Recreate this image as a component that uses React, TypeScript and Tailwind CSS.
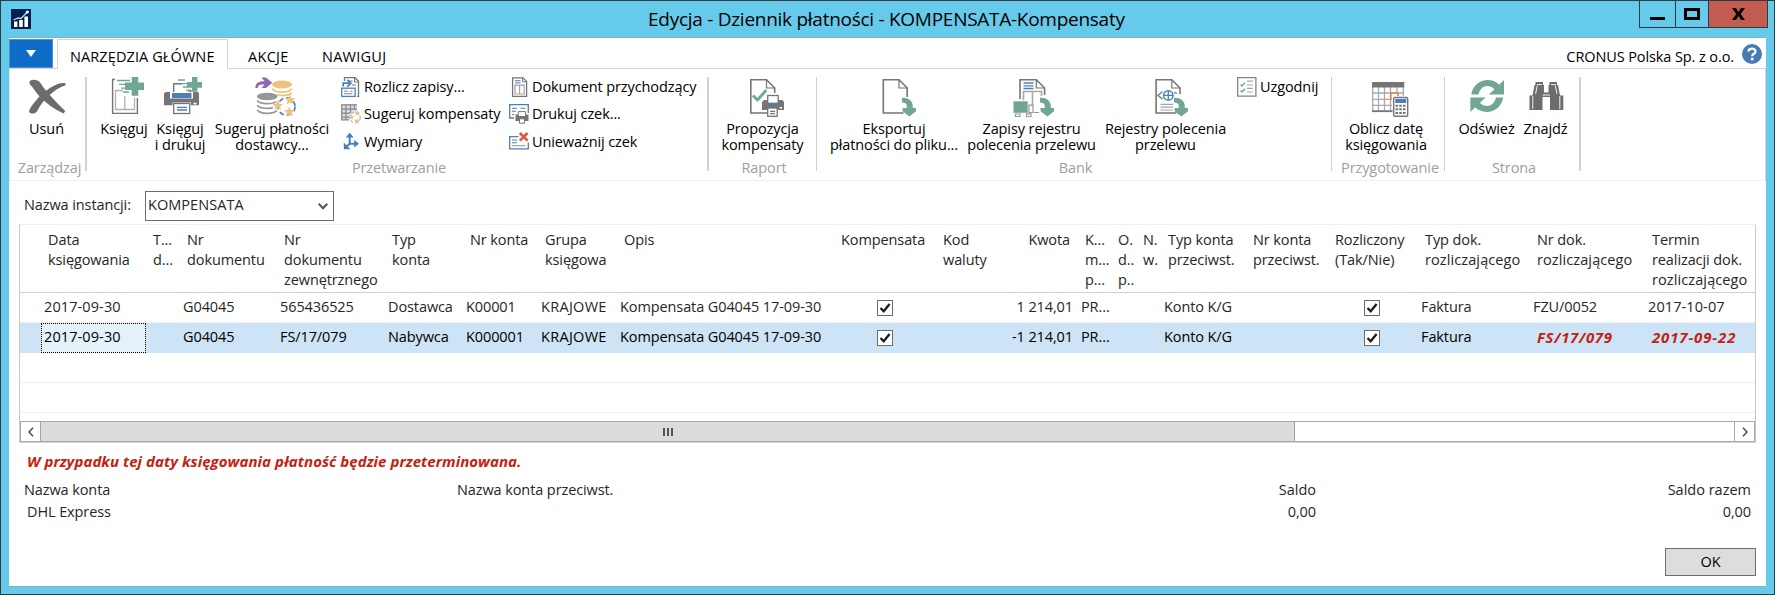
import type { ReactNode } from "react";

const GREEN = "#71a694";
const GRAY = "#757575";
const BLUE = "#4a80ba";
const GOLD = "#ecc27c";

function Big({ children }: { children: ReactNode }) {
  return (
    <svg width="40" height="40" viewBox="0 0 40 40" fill="none" className="overflow-visible">
      {children}
    </svg>
  );
}

function Small({ children }: { children: ReactNode }) {
  return (
    <svg width="20" height="20" viewBox="0 0 20 20" fill="none" className="shrink-0 overflow-visible">
      {children}
    </svg>
  );
}

function Star({ x, y, r = 5 }: { x: number; y: number; r?: number }) {
  return (
    <path
      transform={`translate(${x} ${y}) scale(${r / 5})`}
      d="M0-5.4 1.5-1.7 5.4-1.6 2.4.9 3.4 4.8 0 2.6-3.4 4.8-2.4.9-5.4-1.6-1.5-1.7Z"
      fill={GOLD}
    />
  );
}

function Page({ x, bottom = 20 }: { x: number; bottom?: number }) {
  return (
    <g transform={`translate(${x} 0)`} stroke={GRAY} strokeWidth="1.6">
      <path d={`M24.7 ${bottom}V11L16.5 2.8H.8V36H21`} />
      <path d="M16.5 2.8V11H24.7" strokeWidth="1.2" />
    </g>
  );
}

function DownArrow({ x }: { x: number }) {
  return (
    <path
      transform={`translate(${x} 20)`}
      d="M0 .7C6 .3 10.8 3.5 10.8 9V11H14V14.2L7.4 19.6.6 14.2V11H4.8V9C4.8 6.6 3 5.4 0 5.4Z"
      fill={GREEN}
    />
  );
}

const DeleteIcon = () => (
  <Big>
    <g fill="#6c6c6c">
      <path d="M2.8 4C6 1.8 11 2.8 13.5 6 18 13.5 28.5 24.5 38.3 34L36.6 36.4C25 31.5 11.5 20.5 5 9.5 2.6 8 2 5.5 2.8 4Z" />
      <path d="M38.5 6.3C31 4.8 17.5 13 9 23.5 5 28.5 2 32 2.2 35 4 37.5 8.5 37.2 10.5 33.5 15.5 23.5 27 12 38.5 8.3Z" />
    </g>
  </Big>
);

const PostIcon = () => (
  <Big>
    <path d="M11 2.5H8.6V36.4H33.4V21" stroke={GRAY} strokeWidth="1.4" />
    <path d="M19 13.5H11.5V32.5H30.5V21M20.8 19V32.5" stroke="#b0b0b0" strokeWidth="1.3" />
    <path d="M13 3.5H26M15 7.3H22M17 11.2H22M19 15H25" stroke={GREEN} strokeWidth="1.3" />
    <path d="M27.7 0H34.3V5.5H40V13H34.3V18.7H27.7V13H21V5.5H27.7Z" fill={GREEN} />
  </Big>
);

const PostPrintIcon = () => (
  <Big>
    <path d="M5.5 15H10V21.5H33V15H38L39 16.5V28.3H31V25.5H12.5V28.3H4V16.5Z" fill={GRAY} />
    <path d="M13.7 15V6.7H22M28 14H31V15" stroke={GRAY} strokeWidth="1.4" />
    <rect x="12" y="16" width="19.5" height="5" fill={BLUE} />
    <rect x="13.7" y="26.5" width="16" height="10" fill="#fff" stroke={GRAY} strokeWidth="1.3" />
    <path d="M17 30.3H27M17 33H27" stroke={BLUE} strokeWidth="1.3" />
    <rect x="33.5" y="25.8" width="3" height="1.6" fill="#fff" />
    <path d="M18 3H25M21 6.6H28M23 10H27M26 13.2H31" stroke={GREEN} strokeWidth="1.3" />
    <path d="M32 0H37.4V5H42V10.7H37.4V14.7H32V10.7H27V5H32Z" fill={GREEN} />
  </Big>
);

const SuggestIcon = () => (
  <Big>
    <path d="M3.3 11C3.5 6 6.5 4 12.5 4.2L9.5.6H14L20.3 5.7 14 11H9.5L12.5 7.6C8 7.2 6 8 5.8 11Z" fill="#9467b5" />
    <ellipse cx="30" cy="7.5" rx="10" ry="4" fill={GOLD} />
    <path d="M20.3 11.5C22 16.2 38 16.2 39.7 11.5M24.5 17.5C30 19.5 37 18.5 39.7 16" stroke={GOLD} strokeWidth="1.8" />
    <ellipse cx="15.2" cy="19.5" rx="10.3" ry="3.8" fill="#979797" />
    <path d="M5.3 23.5C8 27.6 21 27.6 24 24.5M5.3 28.3C7.5 31.7 18 32 21 30.5M5.3 33C8 37.3 22 37.3 25 33.5" stroke="#979797" strokeWidth="1.7" />
    <circle cx="34.5" cy="29.5" r="8.6" stroke={BLUE} strokeWidth="1.7" strokeDasharray="5 3" />
    <Star x={25.8} y={28.5} />
    <Star x={38} y={22.8} />
    <Star x={37.2} y={34.8} />
  </Big>
);

const ProposalIcon = () => (
  <Big>
    <Page x={7} bottom={16} />
    <path d="M10 18.5 14.5 23 23.3 13" stroke={GREEN} strokeWidth="2.8" />
    <path d="M21 23H39.5L41 25V33H19V25Z" fill={GRAY} />
    <rect x="24.7" y="18.5" width="10.5" height="8" fill="#fff" stroke={GRAY} strokeWidth="1.3" />
    <path d="M25 26.5H35" stroke={BLUE} strokeWidth="1.5" />
    <rect x="24.7" y="31" width="9.5" height="8.3" fill="#fff" stroke={GRAY} strokeWidth="1.3" />
    <path d="M27 34.3H32M27 36.6H32" stroke={BLUE} strokeWidth="1.2" />
    <rect x="36.5" y="30" width="2.6" height="1.5" fill="#fff" />
  </Big>
);

const ExportIcon = () => (
  <Big>
    <Page x={8.5} />
    <DownArrow x={28} />
  </Big>
);

const TransferEntriesIcon = () => (
  <Big>
    <path d="M8 22V2.8H24.3L32.6 11V18" stroke={GRAY} strokeWidth="1.6" />
    <path d="M24.3 2.8V11H32.6" stroke={GRAY} strokeWidth="1.2" />
    <path d="M11.5 6H21.5M11.5 8.8H21.5M11.5 11.5H21.5" stroke={BLUE} strokeWidth="1.3" />
    <path d="M11.5 23V14.5H29.5V19M20.5 14.5V28" stroke="#a8a8a8" strokeWidth="1.6" />
    <rect x="1.5" y="24.3" width="14.2" height="11.5" fill={GREEN} />
    <path d="M17 28.2H21V35.5H17ZM3.5 37H8V39.5H3.5ZM14.5 36.8H19V39.5H14.5ZM22 35.5H27" stroke="#999" strokeWidth="1.2" />
    <DownArrow x={28} />
  </Big>
);

const TransferRegistersIcon = () => (
  <Big>
    <Page x={9.3} bottom={17} />
    <circle cx="22.3" cy="18.4" r="4.7" stroke={BLUE} strokeWidth="1.5" />
    <path d="M17.5 18.4H27M22.3 13.7V23M28 15.3 31 16.5" stroke={BLUE} strokeWidth="1.3" />
    <path d="M16.5 14.5 12 18.4 16.5 22" stroke={GRAY} strokeWidth="1.3" />
    <path d="M14.5 27.4H27M14.5 30.2H27M14.5 33H27" stroke="#a5a5a5" strokeWidth="1.2" />
    <DownArrow x={28} />
  </Big>
);

const CalendarIcon = () => (
  <Big>
    <path d="M6.7 10V34H27M12.5 10V34M18.5 10V34M24.5 10V34M31 10V16M37.3 10V19M6 16H38M6 22.3H26M6 28.3H26" stroke="#a9a9a9" strokeWidth="1.3" />
    <path d="M6 34.3H26" stroke={GRAY} strokeWidth="1.6" />
    <rect x="6" y="5" width="32.3" height="5.5" fill={GRAY} />
    <path d="M24.8 23V16H32V19" stroke="#e08a4a" strokeWidth="1.6" />
    <rect x="27.7" y="20.5" width="14" height="18.8" rx="1.2" fill="#fff" stroke={GRAY} strokeWidth="1.4" />
    <rect x="29.3" y="22" width="11" height="4" fill={BLUE} />
    <path d="M29.5 28.8H40M29.5 32.3H40M29.5 36H40" stroke={GRAY} strokeWidth="2" strokeDasharray="2.6 1.1" />
  </Big>
);

const REFRESH_HALF =
  "M4.3 17.5C5.5 8.5 13 3 20.5 3 25.5 3 29.5 5 32.2 7.7L37 3V17.5H21.8L27.5 12.3C25.5 10.2 23 9 20.3 9 16 9 12.8 12 11.5 17.5Z";

const RefreshIcon = () => (
  <Big>
    <g fill={GREEN}>
      <path d={REFRESH_HALF} />
      <path transform="rotate(180 20.2 19)" d={REFRESH_HALF} />
    </g>
  </Big>
);

const FindIcon = () => (
  <Big>
    <path
      d="M9.5 5H17V8H18V15.5H22.5V8H23.5V5H31V8H32L34 18.5H37.3V33H24V20H16.5V33H3.5V18.5H6.5L8.5 8H9.5Z"
      fill="#6c6c6c"
    />
    <path d="M6.8 19V32M33.8 19V32M11.2 8.5 9.6 17M29.3 8.5 31 17M16.5 18H24M11 7.6H16M25 7.6H30" stroke="#fff" strokeWidth=".9" />
  </Big>
);

const ApplyIcon = () => (
  <Small>
    <path d="M3.5 4V.7H14L17.5 4.2V19.4H16" stroke={GRAY} strokeWidth="1.3" />
    <path d="M13.5 1V5H17.5M8 4H11.5M11 8H15" stroke={GRAY} />
    <path d="M2.2 9.5V6.2H8M6.2 2.8 9.8 6.2 6.2 9.6" stroke={BLUE} strokeWidth="1.8" />
    <rect x=".7" y="11.2" width="13.4" height="8.2" fill="#fff" stroke={BLUE} strokeWidth="1.3" />
    <path d="M3 14.2H7M3 16.7H11.5M9 14.2H11.5" stroke="#888" />
  </Small>
);

const SuggestCompIcon = () => (
  <Small>
    <rect x=".5" y="0" width="15.5" height="15.5" fill="#d9dfe6" />
    <path d="M.7 16V.8H16M.7 5.2H16M.7 9.2H9M.7 13.2H9M5 .8V15.5M9.5 .8V9M13.5 .8V6M0 15.8H8" stroke="#858585" strokeWidth="1.2" />
    <circle cx="14" cy="13.5" r="5.2" fill="#fff" stroke="#a9bfd6" strokeWidth="1.3" strokeDasharray="3 2" />
    <Star x={10.3} y={13} r={2.8} />
    <Star x={16.4} y={9.4} r={2.8} />
    <Star x={16} y={17} r={2.8} />
  </Small>
);

const DimensionsIcon = () => (
  <Small>
    <path d="M8.7 4V11.7H15M8.7 11.7 5 15" stroke={BLUE} strokeWidth="2" />
    <path d="M8.7.8 12.8 5.6H4.6ZM18 11.7 13.2 7.8V15.6ZM2.8 17.3V10.6L9.3 17.3Z" fill={BLUE} />
  </Small>
);

const IncomingDocIcon = () => (
  <Small>
    <path d="M3.6.8H14L17.6 4.4V19.3H3.6Z" stroke={GRAY} strokeWidth="1.3" />
    <path d="M13.6 1V4.8H17.5" stroke={GRAY} />
    <path d="M6 3.7H11.5M6 5.8H11.5" stroke={BLUE} />
    <path d="M6 8.2H15.2V17H6ZM10.6 8.2V17" stroke="#a3a3a3" strokeWidth="1.2" />
  </Small>
);

const PrintCheckIcon = () => (
  <Small>
    <path d="M5 14H.7V.7H19.3V9" stroke={BLUE} strokeWidth="1.3" />
    <path d="M3 4.2H8M3 7.3H7M11.5 4.2H16.5M3 10.5H5" stroke={BLUE} strokeWidth="1.1" />
    <path d="M6.5 10.5H19.5V17H6.5Z" fill={GRAY} />
    <path d="M9.3 7.6H16.5V12.5H9.3Z" fill="#fff" stroke={GRAY} />
    <path d="M10.5 14.8H15.5V19.2H10.5Z" fill="#fff" stroke={GRAY} />
  </Small>
);

const VoidCheckIcon = () => (
  <Small>
    <path d="M9.5 4.7H.7V16.8H19.3V10.5" stroke={BLUE} strokeWidth="1.3" />
    <path d="M3 8H8M3 10.8H8" stroke={BLUE} strokeWidth="1.1" />
    <path d="M3 13.7H16.5" stroke="#999" strokeWidth="1.1" />
    <path d="M10.8 1 18.6 8.6M18.6 1 10.8 8.6" stroke="#db5a3a" strokeWidth="2.7" />
  </Small>
);

const ReconcileIcon = () => (
  <Small>
    <path d="M.7.6H18.9V19.1H.7Z" stroke="#858585" strokeWidth="1.3" />
    <path d="M3.6 7.5 5 9 8 5.8M3.6 13.5 5 15 8 11.8" stroke={GREEN} strokeWidth="1.4" />
    <path d="M10 4.2H15.8M10 8H15.8M10 11.4H15.8M10 15H15.8" stroke="#a5a5a5" strokeWidth="1.2" />
  </Small>
);

function BigButton({ icon, lines, width }: { icon: ReactNode; lines: string[]; width: string }) {
  return (
    <button className={`flex shrink-0 flex-col items-center ${width}`}>
      {icon}
      <span className="mt-1 text-center leading-4 whitespace-nowrap text-black">
        {lines.map((line) => (
          <span key={line} className="block">
            {line}
          </span>
        ))}
      </span>
    </button>
  );
}

function SmallButton({ icon, label }: { icon: ReactNode; label: string }) {
  return (
    <button className="flex h-5 items-center gap-[3px] whitespace-nowrap text-black">
      {icon}
      <span className="leading-5">{label}</span>
    </button>
  );
}

function Group({ label, width, pad, labelPad, children }: { label: string; width: string; pad: string; labelPad: string; children: ReactNode }) {
  return (
    <section className={`flex shrink-0 flex-col justify-between ${width}`}>
      <div className={`flex ${pad}`}>{children}</div>
      <div className={`mb-[2px] text-center leading-5 whitespace-nowrap text-[#a0a0a0] ${labelPad}`}>{label}</div>
    </section>
  );
}

const Thick = () => <div className="h-[94px] w-[2px] shrink-0 bg-[#d2d2d2]" />;
const Thin = () => <div className="h-[94px] w-px shrink-0 bg-[#cfcfcf]" />;

function Ribbon() {
  return (
    <div className="flex h-[112px] border-r border-b border-l border-r-[#d4d4d4] border-b-[#efefef] border-l-[#e4e4e4] pt-2">
      <Group label="Zarządzaj" width="w-[75px]" pad="" labelPad="pl-[4px]">
        <BigButton icon={<DeleteIcon />} lines={["Usuń"]} width="w-[73px]" />
      </Group>
      <Thick />
      <Group label="Przetwarzanie" width="w-[620px]" pad="pl-[10px]" labelPad="pl-[4px]">
        <BigButton icon={<PostIcon />} lines={["Księguj"]} width="w-[54px]" />
        <BigButton icon={<PostPrintIcon />} lines={["Księguj", "i drukuj"]} width="w-[58px]" />
        <BigButton icon={<SuggestIcon />} lines={["Sugeruj płatności", "dostawcy..."]} width="w-[126px]" />
        <div className="ml-[6px] grid w-[168px] content-start gap-y-[7.4px]">
          <SmallButton icon={<ApplyIcon />} label="Rozlicz zapisy..." />
          <SmallButton icon={<SuggestCompIcon />} label="Sugeruj kompensaty" />
          <SmallButton icon={<DimensionsIcon />} label="Wymiary" />
        </div>
        <div className="grid content-start gap-y-[7.4px]">
          <SmallButton icon={<IncomingDocIcon />} label="Dokument przychodzący" />
          <SmallButton icon={<PrintCheckIcon />} label="Drukuj czek..." />
          <SmallButton icon={<VoidCheckIcon />} label="Unieważnij czek" />
        </div>
      </Group>
      <Thick />
      <Group label="Raport" width="w-[107px]" pad="" labelPad="pl-[3px]">
        <BigButton icon={<ProposalIcon />} lines={["Propozycja", "kompensaty"]} width="w-[107px]" />
      </Group>
      <Thin />
      <Group label="Bank" width="w-[514px]" pad="pl-[9px]" labelPad="pl-[3px]">
        <BigButton icon={<ExportIcon />} lines={["Eksportuj", "płatności do pliku..."]} width="w-[136px]" />
        <BigButton icon={<TransferEntriesIcon />} lines={["Zapisy rejestru", "polecenia przelewu"]} width="w-[139px]" />
        <BigButton icon={<TransferRegistersIcon />} lines={["Rejestry polecenia", "przelewu"]} width="w-[129px]" />
        <div className="ml-[7px]">
          <SmallButton icon={<ReconcileIcon />} label="Uzgodnij" />
        </div>
      </Group>
      <Thin />
      <Group label="Przygotowanie" width="w-[112px]" pad="" labelPad="pl-[4px]">
        <BigButton icon={<CalendarIcon />} lines={["Oblicz datę", "księgowania"]} width="w-[108px]" />
      </Group>
      <Thin />
      <Group label="Strona" width="w-[134px]" pad="pl-[13px]" labelPad="pl-[4px]">
        <BigButton icon={<RefreshIcon />} lines={["Odśwież"]} width="w-[57px]" />
        <BigButton icon={<FindIcon />} lines={["Znajdź"]} width="w-[61px]" />
      </Group>
      <Thick />
    </div>
  );
}

const GRID =
  "grid grid-cols-[21px_105px_34px_97px_108px_78px_75px_79px_217px_102px_69px_73px_33px_25px_25px_85px_82px_90px_112px_115px_110px]";

const HEADERS: string[][] = [
  [],
  ["Data", "księgowania"],
  ["T...", "d..."],
  ["Nr", "dokumentu"],
  ["Nr", "dokumentu", "zewnętrznego"],
  ["Typ", "konta"],
  ["Nr konta"],
  ["Grupa", "księgowa"],
  ["Opis"],
  ["Kompensata"],
  ["Kod", "waluty"],
  ["Kwota"],
  ["K...", "m...", "p..."],
  ["O.", "d..", "p.."],
  ["N.", "w."],
  ["Typ konta", "przeciwst."],
  ["Nr konta", "przeciwst."],
  ["Rozliczony", "(Tak/Nie)"],
  ["Typ dok.", "rozliczającego"],
  ["Nr dok.", "rozliczającego"],
  ["Termin", "realizacji dok.", "rozliczającego"],
];

const CHECK = "✓";
const ROWS: string[][] = [
  ["", "2017-09-30", "", "G04045", "565436525", "Dostawca", "K00001", "KRAJOWE", "Kompensata G04045 17-09-30", CHECK, "", "1 214,01", "PR...", "", "", "Konto K/G", "", CHECK, "Faktura", "FZU/0052", "2017-10-07"],
  ["", "2017-09-30", "", "G04045", "FS/17/079", "Nabywca", "K000001", "KRAJOWE", "Kompensata G04045 17-09-30", CHECK, "", "-1 214,01", "PR...", "", "", "Konto K/G", "", CHECK, "Faktura", "FS/17/079", "2017-09-22"],
];

function Checkbox() {
  return (
    <svg width="16" height="16" viewBox="0 0 16 16" className="mt-[7px]">
      <rect x=".5" y=".5" width="15" height="15" fill="#fff" stroke="#6b6b6b" />
      <path d="M3.5 8 6.7 11.3 12.6 4" fill="none" stroke="#1c1c1c" strokeWidth="2.3" />
    </svg>
  );
}

function Row({ cells, selected }: { cells: string[]; selected?: boolean }) {
  return (
    <div className={`${GRID} h-[30px] leading-7 whitespace-nowrap ${selected ? "bg-[#cde4f6] text-black" : "border-b border-[#efefef] text-[#262626]"}`}>
      {cells.map((cell, i) => {
        if (cell === CHECK)
          return (
            <div key={i} className={i === 9 ? "pl-[43px]" : "pl-[36px]"}>
              <Checkbox />
            </div>
          );
        if (i === 11)
          return (
            <div key={i} className="pr-[5px] text-right">
              {cell}
            </div>
          );
        if (selected && i === 1)
          return (
            <div key={i} className="border border-dotted border-black bg-[#e5f1f9] pl-[2px] leading-[26px] tracking-[0.1px]">
              {cell}
            </div>
          );
        if (selected && i > 18)
          return (
            <div key={i} className={`pl-[7px] text-[15px] font-bold text-[#c4220f] italic ${i === 20 ? "tracking-[0.85px]" : "tracking-[0.65px]"}`}>
              {cell}
            </div>
          );
        return (
          <div key={i} className={`pl-[3px] ${i === 1 || i === 20 ? "tracking-[0.1px]" : i === 7 ? "tracking-[0.3px]" : ""}`}>
            {cell}
          </div>
        );
      })}
    </div>
  );
}

function Grid() {
  return (
    <div className="mx-[10px] mt-[3px] h-[219px] border-x border-t border-x-[#c9c9c9] border-t-[#efefef] border-b border-b-[#d4d4d4]">
      <div className={`${GRID} h-[68px] border-b border-[#cfcfcf] pt-[5px] leading-5 whitespace-nowrap text-[#262626]`}>
        {HEADERS.map((lines, i) => (
          <div key={i} className={i === 11 ? "pr-[8px] text-right" : "pl-[7px]"}>
            {lines.map((line, j) => (
              <div key={j} className={line === "rozliczającego" ? "tracking-[0.1px]" : ""}>
                {line}
              </div>
            ))}
          </div>
        ))}
      </div>
      <Row cells={ROWS[0]} />
      <Row cells={ROWS[1]} selected />
      <div className="h-[30px] border-b border-[#efefef]" />
      <div className="h-[30px] border-b border-[#efefef]" />
      <div className="mt-[8px] flex h-[21px] border border-[#a8a8a8] bg-white">
        <div className="flex w-[20px] items-center justify-center border-r border-[#a8a8a8]">
          <svg width="6" height="10" viewBox="0 0 6 10" fill="none" stroke="#444" strokeWidth="1.4">
            <path d="M5 .8 1 5 5 9.2" />
          </svg>
        </div>
        <div className="flex w-[1254px] items-center justify-center gap-[2px] border-r border-[#a0a0a0] bg-[#dcdcdc]">
          <i className="h-[8px] w-[2px] bg-[#555]" />
          <i className="h-[8px] w-[2px] bg-[#555]" />
          <i className="h-[8px] w-[2px] bg-[#555]" />
        </div>
        <div className="flex-1" />
        <div className="flex w-[20px] items-center justify-center border-l border-[#a8a8a8]">
          <svg width="6" height="10" viewBox="0 0 6 10" fill="none" stroke="#444" strokeWidth="1.4">
            <path d="M1 .8 5 5 1 9.2" />
          </svg>
        </div>
      </div>
    </div>
  );
}

function TitleBar() {
  return (
    <header className="flex h-[36px] items-start">
      <svg width="20" height="20" viewBox="0 0 20 20" className="mt-[8px] ml-[10px]">
        <rect width="20" height="20" fill="#00204f" />
        <path d="M3 12.5H6.4V18H3ZM8.2 11H11.8V18H8.2ZM13.4 7.5H17V18H13.4Z" fill="#fff" />
        <path d="M2.5 11 7 9 10 9.5 16 3.3" fill="none" stroke="#c9d3e0" strokeWidth="1.3" />
        <circle cx="16.3" cy="3" r="1.6" fill="#fff" />
      </svg>
      <h1 className="mt-[4px] ml-[617px] text-[19px] leading-7 tracking-[-0.27px] text-black">
        Edycja - Dziennik płatności - KOMPENSATA-Kompensaty
      </h1>
      <div className="mr-[6px] ml-auto flex h-[27px] border-x border-b border-[#2b3a44]">
        <button className="flex w-[35px] items-end justify-center pb-[7px]" aria-label="Minimalizuj">
          <span className="h-[3px] w-[15px] bg-black" />
        </button>
        <button className="flex w-[34px] items-center justify-center border-x border-[#2b3a44]" aria-label="Maksymalizuj">
          <span className="h-[12px] w-[16px] border-[3px] border-black" />
        </button>
        <button className="flex w-[58px] items-center justify-center bg-[#c25b50]" aria-label="Zamknij">
          <svg width="13" height="12" viewBox="0 0 13 12">
            <path d="M0 0H4L6.5 3.9 9 0H13L8.7 6 13 12H9L6.5 8.1 4 12H0L4.3 6Z" fill="#000" />
          </svg>
        </button>
      </div>
    </header>
  );
}

function Tabs() {
  return (
    <nav className="flex h-[31px] text-black">
      <div className="flex flex-col border-b border-[#d4d4d4] pt-px">
        <button className="flex h-[29px] w-[44px] items-center justify-center border border-[#4a93d8] bg-[#0f6cc6]" aria-label="Menu">
          <svg width="10" height="7" viewBox="0 0 10 7">
            <path d="M0 0H10L5 7Z" fill="#fff" />
          </svg>
        </button>
      </div>
      <div className="w-[4px] border-b border-[#d4d4d4]" />
      <div className="mt-px w-[171px] border-x border-t border-[#d4d4d4] pl-[12px] leading-[34px] tracking-[0.1px]">NARZĘDZIA GŁÓWNE</div>
      <div className="flex flex-1 border-b border-[#d4d4d4] pl-[20px] leading-[37px]">
        <span className="w-[74px] tracking-[0.3px]">AKCJE</span>
        <span className="tracking-[0.25px]">NAWIGUJ</span>
        <span className="mr-[8px] ml-auto">CRONUS Polska Sp. z o.o.</span>
        <svg width="20" height="20" viewBox="0 0 20 20" className="mt-[6px] mr-[4px]">
          <circle cx="10" cy="10" r="10" fill="#447bb5" />
          <path d="M6.6 7.6C6.6 3.6 13.5 3.7 13.5 7.4 13.5 10 10.2 9.6 10.2 12.3" fill="none" stroke="#fff" strokeWidth="2.3" />
          <rect x="8.9" y="13.8" width="2.6" height="2.5" fill="#fff" />
        </svg>
      </div>
    </nav>
  );
}

export default function App() {
  return (
    <div className="flex h-[595px] w-[1775px] flex-col border border-[#2f3a42] bg-[#66caea] font-['Open_Sans',sans-serif] text-[14.5px] tracking-[-0.1px]">
      <TitleBar />
      <main className="mx-[8px] flex h-[550px] flex-col border-t border-b border-t-[#7fb2c4] border-b-[#7fb2c4] bg-white">
        <Tabs />
        <Ribbon />
        <div className="mt-[10px] flex items-start text-[#262626]">
          <label className="ml-[15px] w-[121px] leading-7">Nazwa instancji:</label>
          <div className="flex h-[30px] w-[189px] items-center justify-between border border-[#6e6e6e] pr-[5px] pl-[2px]">
            <span className="mt-[-3px] leading-7 tracking-[0.05px]">KOMPENSATA</span>
            <svg width="10" height="7" viewBox="0 0 10 7" fill="none" stroke="#555" strokeWidth="2">
              <path d="M.7.8 5 5.3 9.3.8" />
            </svg>
          </div>
        </div>
        <Grid />
        <div className="mt-[8px] ml-[18px] text-[15px] leading-5 font-bold tracking-[0.05px] text-[#c4220f] italic">
          W przypadku tej daty księgowania płatność będzie przeterminowana.
        </div>
        <div className="mt-[8px] mr-[15px] ml-[15px] grid grid-cols-[433px_1fr_200px_434px] leading-[22px] text-[#262626]">
          <span>Nazwa konta</span>
          <span>Nazwa konta przeciwst.</span>
          <span className="pr-px text-right tracking-normal">Saldo</span>
          <span className="text-right tracking-normal">Saldo razem</span>
          <span className="pl-[3px]">DHL Express</span>
          <span />
          <span className="pr-px text-right">0,00</span>
          <span className="text-right">0,00</span>
        </div>
        <button className="mt-auto mr-[10px] mb-[10px] h-[28px] w-[91px] self-end border border-[#6e6e6e] bg-[#dddddd] text-black">OK</button>
      </main>
    </div>
  );
}
